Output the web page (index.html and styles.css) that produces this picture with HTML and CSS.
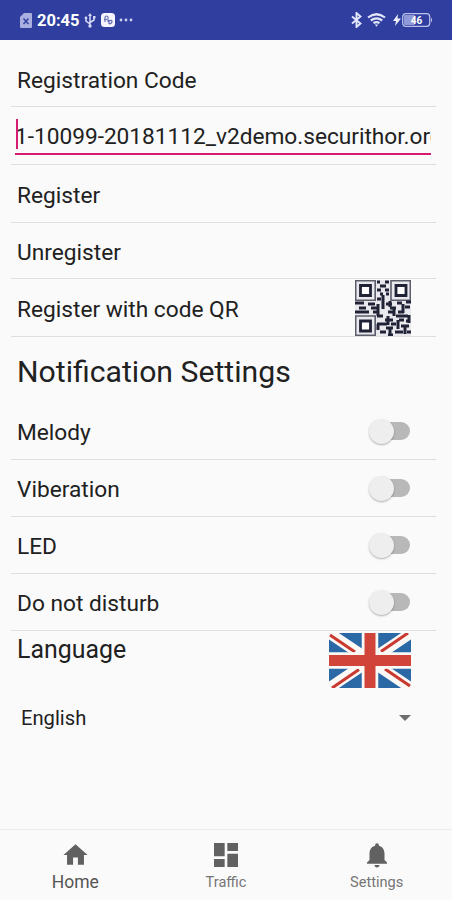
FILE: index.html
```html
<!DOCTYPE html>
<html lang="en">
<head>
    <meta charset="UTF-8">
    <meta name="viewport" content="width=device-width, initial-scale=1.0">
    <title>Settings</title>
    <link rel="stylesheet" href="styles.css">
</head>
<body>
<div class="app">
    <header class="statusbar">
        <div class="status-left">
            <svg class="sim" width="12" height="15" viewBox="0 0 12 15"><path d="M4 0h7q1 0 1 1v13q0 1-1 1H1q-1 0-1-1V4z" fill="#a9b0e0"/><path d="M3.500 5.500l5 5.500M8.500 5.500l-5 5.500" stroke="#303f9f" stroke-width="1.400"/></svg>
            <span class="clock">20:45</span>
            <svg class="usb" width="12" height="15" viewBox="0 0 12 15" fill="none" stroke="#d5d9f5" stroke-width="1.500"><path d="M6 2v11M2 5v3l4 3M10 4v3L6 9.500"/><path d="M6 0l2 3H4z" fill="#d5d9f5" stroke="none"/><circle cx="6" cy="13" r="1.700" fill="#d5d9f5" stroke="none"/><circle cx="2" cy="5" r="1.400" fill="#d5d9f5" stroke="none"/><path d="M9 3h2.500v2.500H9z" fill="#d5d9f5" stroke="none"/></svg>
            <svg class="note" width="14" height="14" viewBox="0 0 14 14"><rect width="14" height="14" rx="3.500" fill="#f4f5fd"/><path d="M4 9V4.500q0-1.500 1.500-1.500T7 4.500V9M3 6.500h3M8 7v4M8 8q3-1.500 3 .5T8 11" fill="none" stroke="#6570b8" stroke-width="1.200"/></svg>
            <svg width="14" height="4" viewBox="0 0 14 4" fill="#cdd2f2"><circle cx="2" cy="2" r="1.400"/><circle cx="7" cy="2" r="1.400"/><circle cx="12" cy="2" r="1.400"/></svg>
        </div>
        <div class="status-right">
            <svg class="bluetooth" width="11" height="16" viewBox="0 0 11 16"><path d="M1 4.500l8.500 7-4 3.500V1l4 3.500-8.500 7" fill="none" stroke="#e3e6fa" stroke-width="1.900"/></svg>
            <svg class="wifi" width="19" height="14" viewBox="0 0 19 14" fill="none" stroke="#e3e6fa" stroke-width="2.200"><path d="M1 4.500q8.500-6.500 17 0M3.800 7.500q5.700-4.300 11.400 0M6.500 10.200q3-2.200 6 0"/><path d="M7.800 11.500h3.400L9.500 13.800z" fill="#e3e6fa" stroke="none"/></svg>
            <svg class="bolt" width="8" height="12" viewBox="0 0 8 12"><path d="M5 0L0 7h3l-1 5 6-7.500H4.500z" fill="#eef0fc"/></svg>
            <svg width="31" height="14" viewBox="0 0 31 14"><rect x=".7" y=".7" width="27" height="12.600" rx="3" fill="none" stroke="#b9c0ea" stroke-width="1.300"/><rect x="2" y="2" width="11" height="10" rx="1" fill="#8f9ad8"/><path d="M29 4.500q2 2.500 0 5z" fill="#c9cef0"/><text x="14.500" y="10.700" class="battery-text">46</text></svg>
        </div>
    </header>

    <main class="settings">
        <div class="row first">Registration Code</div>
        <div class="row code">
            <div class="field"><span class="caret"></span><span class="code-text">1-10099-20181112_v2demo.securithor.org</span></div>
        </div>
        <div class="row register">Register</div>
        <div class="row unregister">Unregister</div>
        <div class="row qr-row">
            <span class="qr-label">Register with code QR</span>
            <svg class="qr" width="56" height="56" viewBox="0 0 56 56">
                <rect width="56" height="56" fill="#e9e9ed"/>
                <g fill="none" stroke="#5c5e6c" stroke-width="1.600">
                    <path d="M.7 .7h19.500v19.500H.7zM36 .7h19.300v19.500H36zM.7 36h19.500v19.300H.7z"/>
                </g>
                <g fill="#fff" stroke="#202336" stroke-width="2.800">
                    <path d="M5.500 5.500h10v10h-10zM41 5.500h10v10H41zM5.500 41h10v10h-10z"/>
                </g>
                <path d="M22 2h3M30 2h4M25 6h6M22 10h4M30 10h4M25 14h3M31 14h3M22 19h4M0 23h9M13 24h7M31 24h6M42 23h5M51 22h5M4 28h7M16 28h8M35 28h6M50 27h5M0 32h14M18 32h5M33 32h6M43 32h6M22 36h6M41 36h12M30 40h8M44 40h5M51 41h3M22 44h10M36 44h5M46 46h8M31 48h7M25 52h6M40 52h8M52 52h4M33 55h5" stroke="#202336" stroke-width="3.200"/>
                <path d="M28 15v14M35 21v6M23 24v12M39 27v9M48 24v9M54 35v8M33 36v9M23 44v6M43 40v9M35 48v6M50 46v8" stroke="#202336" stroke-width="3"/>
            </svg>
        </div>

        <h2 class="section-title">Notification Settings</h2>

        <div class="row switch-row"><span>Melody</span><span class="switch"><i class="thumb"></i></span></div>
        <div class="row switch-row"><span>Viberation</span><span class="switch"><i class="thumb"></i></span></div>
        <div class="row switch-row"><span>LED</span><span class="switch"><i class="thumb"></i></span></div>
        <div class="row switch-row"><span>Do not disturb</span><span class="switch"><i class="thumb"></i></span></div>

        <div class="language">
            <span class="language-label">Language</span>
            <svg class="flag" width="82" height="55" viewBox="0 0 82 55">
                <rect width="82" height="55" fill="#2b68a6"/>
                <path d="M0 0l82 55M82 0L0 55" stroke="#fbf8f5" stroke-width="11"/>
                <path d="M1 2l25 17M79 0L52 18.500M3 55l27-18.500M81 53L56 36" stroke="#c9392f" stroke-width="3"/>
                <path d="M41 0v55M0 27.500h82" stroke="#fbf8f5" stroke-width="16.500"/>
                <path d="M41 0v55M0 27.500h82" stroke="#d0443a" stroke-width="11"/>
            </svg>
        </div>
        <div class="select">
            <span>English</span>
            <svg width="12" height="6" viewBox="0 0 12 6"><path d="M0 0h12L6 6z" fill="#6d6d6d"/></svg>
        </div>
    </main>

    <nav class="tabs">
        <div class="tab active">
            <svg width="29" height="29" viewBox="0 0 24 24"><path d="M10 20v-6h4v6h5v-8h3L12 3 2 12h3v8z"/></svg>
            <span>Home</span>
        </div>
        <div class="tab">
            <svg width="32" height="32" viewBox="0 0 24 24"><path d="M3 13h8V3H3v10zm0 8h8v-6H3v6zm10 0h8V11h-8v10zm0-18v6h8V3h-8z"/></svg>
            <span>Traffic</span>
        </div>
        <div class="tab">
            <svg width="30" height="30" viewBox="0 0 24 24"><path d="M12 22c1.100 0 2-.9 2-2h-4c0 1.100.9 2 2 2zm6-6v-5c0-3.070-1.640-5.640-4.500-6.320V4c0-.83-.67-1.500-1.500-1.500s-1.500.67-1.500 1.500v.68C7.630 5.360 6 7.920 6 11v5l-2 2v1h16v-1l-2-2z"/></svg>
            <span>Settings</span>
        </div>
    </nav>
</div>
</body>
</html>
```
FILE: styles.css
```css
*{
    margin: 0;
    padding: 0;
    box-sizing: border-box;
}
body{
    background-color: #fafafa;
    font-family: Roboto, sans-serif;
    color: #212121;
    font-size: 22.7px;
}
svg{
    display: block;
    flex: none;
}
.app{
    display: flex;
    flex-direction: column;
    height: 900px;
    overflow: hidden;
}
.statusbar{
    display: flex;
    justify-content: space-between;
    height: 40px;
    padding: 0 19px 0 20px;
    background-color: #303f9f;
    flex: none;
}
.status-left, .status-right{
    display: flex;
    align-items: center;
}
.clock{
    margin: 1px 5px 0 5px;
    width: 42px;
    color: white;
    font-size: 16.5px;
    font-weight: bold;
    line-height: 20px;
}
.usb{
    margin-right: 5px;
}
.note{
    margin-right: 4px;
}
.bluetooth{
    margin-right: 5px;
}
.wifi{
    margin-right: 7px;
}
.bolt{
    margin-right: 1px;
}
.battery-text{
    fill: white;
    font-size: 10px;
    font-weight: bold;
    text-anchor: middle;
}
.settings{
    flex: 1;
    padding: 0 16px 0 11px;
}
.row{
    display: flex;
    align-items: center;
    height: 57px;
    padding-top: 4px;
    padding-left: 6px;
    border-bottom: 1px solid #dedede;
    line-height: 28px;
}
.first{
    height: 67px;
    padding-top: 16px;
}
.code{
    height: 58px;
    padding: 0 5px 0 4px;
}
.field{
    position: relative;
    width: 100%;
    height: 38px;
    padding-top: 6px;
    margin-top: 1px;
    overflow: hidden;
    border-bottom: 2px solid #d81b72;
    white-space: nowrap;
    font-size: 22.7px;
}
.code-text{
    letter-spacing: -0.02px;
}
.caret{
    position: absolute;
    left: 1px;
    top: 2px;
    width: 2px;
    height: 30px;
    background-color: #d81b72;
}
.register{
    height: 58px;
    padding-top: 5px;
}
.unregister{
    height: 56px;
}
.qr-row{
    justify-content: space-between;
    height: 58px;
    padding-top: 0;
    padding-right: 25px;
}
.qr-label{
    padding-top: 4px;
}
.section-title{
    height: 66px;
    padding-left: 6px;
    font-size: 30.2px;
    font-weight: 400;
    line-height: 69px;
}
.switch-row{
    justify-content: space-between;
    padding-right: 26px;
}
.switch{
    position: relative;
    width: 38px;
    height: 18px;
    margin-top: -4px;
    border-radius: 9px;
    background-color: #b8b8b8;
}
.thumb{
    position: absolute;
    left: -3px;
    top: -3px;
    width: 25px;
    height: 25px;
    border-radius: 50%;
    background-color: #eeeeee;
    box-shadow: 0 1px 2px rgba(0,0,0,0.3);
}
.language{
    display: flex;
    justify-content: space-between;
    height: 60px;
    padding: 2px 25px 0 6px;
}
.language-label{
    font-size: 24.9px;
    line-height: 34px;
}
.select{
    display: flex;
    align-items: center;
    justify-content: space-between;
    height: 54px;
    padding: 0 25px 0 10px;
    font-size: 20.2px;
}
.tabs{
    display: flex;
    flex: none;
    height: 71px;
    border-top: 1px solid #ececec;
}
.tab{
    display: flex;
    flex-direction: column;
    align-items: center;
    flex: 1;
    color: #757575;
    font-size: 14.6px;
    line-height: 20px;
}
.tab svg{
    height: 32px;
    margin-top: 9px;
    fill: #616161;
}
.tab span{
    margin-top: 1px;
}
.active{
    color: #555555;
    font-size: 17.5px;
}
```
